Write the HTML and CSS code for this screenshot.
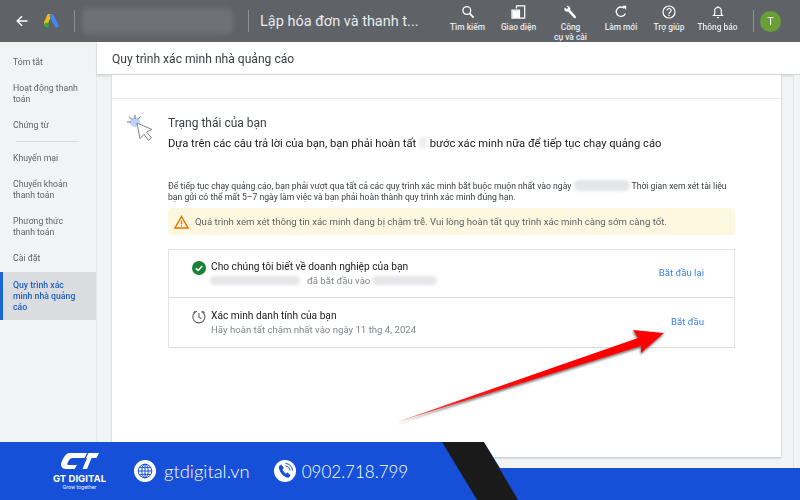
FILE: index.html
```html
<!DOCTYPE html>
<html lang="vi">
<head>
  <meta charset="UTF-8">
  <title>Quy trình xác minh nhà quảng cáo</title>
  <link rel="stylesheet" href="styles.css">
</head>
<body>
<div class="screen">
  <div class="page">

    <header class="topbar">
      <svg class="back-icon" width="12" height="12" viewBox="0 0 12 12"><path d="M11.500 6H1.500M6 1.200L1.200 6 6 10.800" fill="none" stroke="#fff" stroke-width="1.400"/></svg>
      <svg class="ads-logo" width="15" height="14" viewBox="0 0 15 14">
        <path d="M5.200 1.500L1.800 9.500" stroke="#fbbc04" stroke-width="4" stroke-linecap="round"/>
        <path d="M7.600 2l5 9.400" stroke="#4285f4" stroke-width="4.200" stroke-linecap="round"/>
        <circle cx="2.600" cy="11" r="2.400" fill="#34a853"/>
      </svg>
      <span class="top-sep"></span>
      <span class="blur-blob account-blob"></span>
      <span class="top-sep title-sep"></span>
      <span class="top-title">Lập hóa đơn và thanh t...</span>

      <nav class="tools">
        <a class="tool">
          <svg width="14" height="14" viewBox="0 0 14 14"><circle cx="5.800" cy="5.500" r="3.900" fill="none" stroke="#fff" stroke-width="1.300"/><path d="M8.600 8.400l4 4.200" stroke="#fff" stroke-width="1.600"/></svg>
          <span>Tìm kiếm</span>
        </a>
        <a class="tool">
          <svg width="15" height="14" viewBox="0 0 15 14"><path d="M5.500 3.500V.8h8.200v12.400H1V5.200h7.500v8" fill="none" stroke="#fff" stroke-width="1.200"/><rect x="1.500" y="5.800" width="6.500" height="7" fill="#fff"/></svg>
          <span>Giao diện</span>
        </a>
        <a class="tool">
          <svg width="15" height="14" viewBox="0 0 15 14"><path d="M3.400.8L5.200 2.800 4 4.200 2 2.400C1 3.800 1.300 5.500 2.600 6.300c.8.500 1.700.5 2.500.2l5.600 6.300c.6.600 1.400.6 1.900.1.600-.6.600-1.400 0-2L7.200 4.900c.4-1.300 0-2.600-1.100-3.500-.8-.6-1.800-.8-2.700-.6z" fill="#fff"/></svg>
          <span>Công<br>cụ và cài</span>
        </a>
        <a class="tool">
          <svg width="14" height="14" viewBox="0 0 14 14"><path d="M11.300 8.500A4.700 4.700 0 1 1 10.300 3.400" fill="none" stroke="#fff" stroke-width="1.300"/><path d="M8.300.8h3.900v3.900z" fill="#fff"/></svg>
          <span>Làm mới</span>
        </a>
        <a class="tool">
          <svg width="14" height="14" viewBox="0 0 14 14"><circle cx="7" cy="7" r="6" fill="none" stroke="#fff" stroke-width="1.200"/><path d="M5 5.400a2 2 0 1 1 3 1.800c-.7.400-1 .8-1 1.500" fill="none" stroke="#fff" stroke-width="1.200"/><circle cx="7" cy="10.300" r=".8" fill="#fff"/></svg>
          <span>Trợ giúp</span>
        </a>
        <a class="tool">
          <svg width="14" height="14" viewBox="0 0 14 14"><path d="M2.500 10.500h9L10.300 9V5.800A3.300 3.300 0 0 0 3.700 5.800V9z" fill="none" stroke="#fff" stroke-width="1.200"/><path d="M5.800 12h2.400a1.200 1.200 0 0 1-2.400 0zM6.300 1.200h1.400v1.300H6.300z" fill="#fff"/></svg>
          <span>Thông báo</span>
        </a>
      </nav>
      <span class="top-sep avatar-sep"></span>
      <span class="avatar">T</span>
    </header>

    <div class="layout">
      <aside class="sidebar">
        <a class="side-item">Tóm tắt</a>
        <a class="side-item">Hoạt động thanh<br>toán</a>
        <a class="side-item">Chứng từ</a>
        <div class="side-divider"></div>
        <a class="side-item">Khuyến mại</a>
        <a class="side-item">Chuyển khoản<br>thanh toán</a>
        <a class="side-item">Phương thức<br>thanh toán</a>
        <a class="side-item">Cài đặt</a>
        <a class="side-item active">Quy trình xác<br>minh nhà quảng<br>cáo</a>
      </aside>

      <main class="main">
        <div class="title-bar">Quy trình xác minh nhà quảng cáo</div>
        <div class="content">
          <div class="scroll-area">
            <section class="card">
              <div class="card-top"></div>
              <div class="status">
                <svg class="status-icon" width="28" height="29" viewBox="0 0 28 29">
                  <circle cx="8" cy="7" r="5" fill="#bcd3f7"/>
                  <path d="M8 0v4M0 7h4M2 1.500l3 3M13.500 1.500l-2.500 3" stroke="#5f6368" stroke-width=".9" fill="none"/>
                  <path d="M10 8l15 6.500-5.500 2.500 5 6-3 2.500-4.500-6.200-4 4.200z" fill="#fff" stroke="#80868b" stroke-width="1"/>
                </svg>
                <div class="status-body">
                  <h2 class="status-title">Trạng thái của bạn</h2>
                  <p class="status-lead">Dựa trên các câu trả lời của bạn, bạn phải hoàn tất <span class="blur-blob count-blob"></span> bước xác minh nữa để tiếp tục chạy quảng cáo</p>
                  <p class="status-note">Để tiếp tục chạy quảng cáo, bạn phải vượt qua tất cả các quy trình xác minh bắt buộc muộn nhất vào ngày <span class="blur-blob date-blob"></span> Thời gian xem xét tài liệu<br>bạn gửi có thể mất 5–7 ngày làm việc và bạn phải hoàn thành quy trình xác minh đúng hạn.</p>
                  <div class="warning">
                    <svg width="15" height="14" viewBox="0 0 15 14"><path d="M7.500 1.500L1 13h13z" fill="none" stroke="#e37400" stroke-width="1.500"/><path d="M7.500 5.500v4M7.500 10.300v1.300" stroke="#e37400" stroke-width="1.300"/></svg>
                    <span>Quá trình xem xét thông tin xác minh đang bị chậm trễ. Vui lòng hoàn tất quy trình xác minh càng sớm càng tốt.</span>
                  </div>
                  <div class="steps">
                    <div class="step">
                      <svg class="step-icon" width="14" height="14" viewBox="0 0 14 14"><circle cx="7" cy="7" r="7" fill="#188038"/><path d="M3.800 7.200l2.300 2.200 4.200-4.400" fill="none" stroke="#fff" stroke-width="1.500"/></svg>
                      <div class="step-text">
                        <div class="step-name">Cho chúng tôi biết về doanh nghiệp của bạn</div>
                        <div class="step-sub"><span class="blur-blob user-blob"></span>đã bắt đầu vào<span class="blur-blob when-blob"></span></div>
                      </div>
                      <a class="step-link">Bắt đầu lại</a>
                    </div>
                    <div class="step">
                      <svg class="step-icon" width="14" height="14" viewBox="0 0 14 14"><path d="M5 1.200A6 6 0 1 0 9.500 1.500" fill="none" stroke="#5f6368" stroke-width="1.100"/><path d="M7 3v4.200l2.500 1.500M3.500 1l-2 2M10.500 1l2 2" fill="none" stroke="#5f6368" stroke-width="1.100"/></svg>
                      <div class="step-text">
                        <div class="step-name">Xác minh danh tính của bạn</div>
                        <div class="step-sub">Hãy hoàn tất chậm nhất vào ngày 11 thg 4, 2024</div>
                      </div>
                      <a class="step-link">Bắt đầu</a>
                    </div>
                  </div>
                </div>
              </div>
            </section>
          </div>
          <div class="scrollbar"></div>
        </div>
      </main>
    </div>
  </div>

  <svg class="arrow" width="290" height="110" viewBox="390 320 290 110">
    <defs>
      <linearGradient id="arrowFill" gradientUnits="userSpaceOnUse" x1="397" y1="422" x2="540" y2="375">
        <stop offset="0" stop-color="#e88a8a"/>
        <stop offset=".4" stop-color="#f52020"/>
        <stop offset="1" stop-color="#ff0000"/>
      </linearGradient>
      <filter id="arrowShadow" x="-10%" y="-20%" width="120%" height="150%">
        <feDropShadow dx="-0.500" dy="1.800" stdDeviation="1.200" flood-color="#444" flood-opacity=".75"/>
      </filter>
    </defs>
    <path d="M397 422L638 338 633 330 664 333 641 353 641 346z" fill="url(#arrowFill)" filter="url(#arrowShadow)"/>
  </svg>

  <footer class="banner">
    <span class="banner-stripe"></span>
    <div class="brand">
      <svg width="38" height="18" viewBox="0 0 38 18"><path d="M9 1H26L23.500 6H12C9.500 6 8.500 7 7.500 9L6.500 11C6 12.500 6.500 13 8 13H16L13.500 17H5C1 17-1 14 .5 10L2.500 6C4 3 6 1 9 1z" fill="#fff"/><path d="M27.500 1H38L35.500 6H30.500L26 17H21.500L26 6H25z" fill="#fff"/></svg>
      <div class="brand-name">GT DIGITAL</div>
      <div class="brand-tag">Grow together</div>
    </div>
    <div class="contact web">
      <svg width="22" height="22" viewBox="0 0 22 22"><circle cx="11" cy="11" r="11" fill="#fff"/><g fill="none" stroke="#1650d8" stroke-width="1"><circle cx="11" cy="11" r="6.800"/><ellipse cx="11" cy="11" rx="3.200" ry="6.800"/><path d="M11 4.200v13.600M4.200 11h13.600M5.200 7.600h11.600M5.200 14.400h11.600"/></g></svg>
      <span>gtdigital.vn</span>
    </div>
    <div class="contact phone">
      <svg width="22" height="22" viewBox="0 0 22 22"><circle cx="11" cy="11" r="11" fill="#fff"/><path d="M4.800 6.500l2.500-2 2.600 3.600-1.400 1.500c.6 1.700 1.700 3 3.500 4.200l1.600-1.300 3 3-2 2.300C9.800 17.500 4.800 12 4.800 6.500z" fill="#1650d8"/><g fill="none" stroke="#1650d8" stroke-width="1"><path d="M11.500 6a4.500 4.500 0 0 1 4.500 4.500"/><path d="M11.500 3.500a7 7 0 0 1 7 7"/></g></svg>
      <span>0902.718.799</span>
    </div>
  </footer>
</div>
</body>
</html>
```

FILE: styles.css
```css
* {
  box-sizing: border-box;
}

body {
  margin: 0;
  font-family: Roboto, "Liberation Sans", sans-serif;
}

h2, p {
  margin: 0;
}

.screen {
  position: relative;
  width: 800px;
  height: 500px;
  overflow: hidden;
  background: #f1f3f4;
}

.page {
  display: flex;
  flex-direction: column;
  height: 500px;
  filter: blur(0.35px);
}

/* top bar */
.topbar {
  display: flex;
  align-items: center;
  flex: none;
  height: 42px;
  padding-left: 16px;
  background: #5f6368;
  color: #fff;
}

.ads-logo {
  margin-left: 16px;
}

.top-sep {
  flex: none;
  width: 1px;
  height: 22px;
  margin-left: 15px;
  background: #8e9195;
}

.blur-blob {
  display: inline-block;
  border-radius: 6px;
  filter: blur(1.5px);
}

.account-blob {
  width: 151px;
  height: 26px;
  margin-left: 7px;
  background: #6e7175;
  filter: blur(2.5px);
}

.title-sep {
  margin-left: 15px;
}

.top-title {
  margin-left: 11px;
  font-size: 14.500px;
  white-space: nowrap;
  color: #e8eaed;
}

.tools {
  display: grid;
  grid-template-columns: 51px 51px 53px 48px 48px 49px;
  margin-left: auto;
  height: 42px;
  padding-top: 5px;
}

.tool {
  display: flex;
  flex-direction: column;
  align-items: center;
  gap: 3px;
  font-size: 8.400px;
  font-weight: 500;
  line-height: 10px;
  text-align: center;
  white-space: nowrap;
  color: #e8eaed;
}

.avatar-sep {
  margin-left: 11px;
}

.avatar {
  display: flex;
  align-items: center;
  justify-content: center;
  width: 21px;
  height: 21px;
  margin: 0 19px 0 6px;
  border-radius: 50%;
  background: #6a9f35;
  font-size: 11px;
}

/* sidebar */
.layout {
  display: flex;
  flex: 1;
  min-height: 0;
}

.sidebar {
  flex: none;
  width: 97px;
  padding-top: 7px;
  background: #f1f3f4;
  border-right: 1px solid #e6e7e9;
}

.side-item {
  display: block;
  padding: 7.500px 4px 7.500px 13px;
  font-size: 8.700px;
  line-height: 11px;
  color: #5f6368;
}

.side-item.active {
  margin-top: 1px;
  background: #dadce0;
  border-left: 3px solid #1967d2;
  padding-left: 10px;
  font-weight: 500;
  color: #1a5fc4;
}

.side-divider {
  height: 1px;
  margin: 3px 17px 3px 16px;
  background: #dadce0;
}

/* main */
.main {
  display: flex;
  flex-direction: column;
  flex: 1;
  min-width: 0;
}

.title-bar {
  flex: none;
  height: 33px;
  padding: 10px 0 0 15px;
  background: #fff;
  border-bottom: 1px solid #d5d6d8;
  box-shadow: 0 1px 2px rgba(0, 0, 0, 0.12);
  font-size: 12.100px;
  line-height: 15px;
  color: #3c4043;
}

.content {
  display: flex;
  flex: 1;
  min-height: 0;
}

.scroll-area {
  flex: 1;
  display: flex;
  padding: 0 12px 43px 15px;
}

.scrollbar {
  flex: none;
  width: 7px;
  background: #f3f4f6;
  border-left: 1px solid #e3e4e6;
}

.card {
  flex: 1;
  background: #fff;
  box-shadow: 0 1px 2px rgba(60, 64, 67, 0.3);
}

.card-top {
  height: 24px;
  border-bottom: 1px solid #e8eaed;
}

.status {
  display: flex;
  padding: 16px 46px 0 15px;
}

.status-icon {
  flex: none;
  margin-right: 13px;
}

.status-body {
  flex: 1;
  min-width: 0;
}

.status-title {
  font-size: 12px;
  font-weight: 400;
  line-height: 16px;
  color: #3c4043;
}

.status-lead {
  margin-top: 5px;
  font-size: 11.200px;
  line-height: 16px;
  white-space: nowrap;
  color: #202124;
}

.count-blob {
  width: 8px;
  height: 11px;
  vertical-align: -1px;
  background: #eeeeee;
}

.status-note {
  margin-top: 28px;
  font-size: 8.650px;
  line-height: 11px;
  white-space: nowrap;
  color: #3c4043;
}

.date-blob {
  width: 56px;
  height: 11px;
  vertical-align: -2px;
  background: #e4e5e7;
}

.warning {
  display: flex;
  align-items: center;
  gap: 6px;
  height: 27px;
  margin-top: 5px;
  padding-left: 6px;
  border-radius: 4px;
  background: #fef7e0;
  font-size: 9.600px;
  white-space: nowrap;
  color: #5f6368;
}

.steps {
  margin-top: 14px;
  border: 1px solid #e3e4e6;
  border-bottom-color: #d9dadc;
}

.step {
  display: flex;
  align-items: flex-start;
  height: 47px;
  padding: 10px 30px 0 23px;
}

.step + .step {
  height: 50px;
  padding-top: 11px;
  border-top: 1px solid #dadce0;
}

.step-icon {
  flex: none;
  margin: 1px 5px 0 0;
}

.step-text {
  flex: 1;
}

.step-name {
  font-size: 10.200px;
  line-height: 14px;
  color: #202124;
}

.step-sub {
  display: flex;
  align-items: center;
  font-size: 9.600px;
  line-height: 13px;
  color: #80868b;
}

.user-blob {
  width: 90px;
  height: 9px;
  margin: 0 7px 0 -1px;
  background: #e6e7e9;
}

.when-blob {
  width: 65px;
  height: 9px;
  margin-left: 2px;
  background: #e6e7e9;
}

.step-link {
  margin-top: 7px;
  font-size: 9.600px;
  line-height: 12px;
  color: #3b82e8;
}

/* red annotation arrow drawn over the screenshot */
.arrow {
  position: absolute;
  left: 390px;
  top: 320px;
}

/* promo banner over the bottom of the page */
.banner {
  position: absolute;
  left: 0;
  bottom: 0;
  display: flex;
  align-items: center;
  width: 800px;
  height: 58px;
  padding-left: 52px;
  color: #fff;
  background: #1650d8;
  clip-path: polygon(0 0, 484px 0, 500px 26px, 800px 26px, 800px 58px, 0 58px);
}

.banner-stripe {
  position: absolute;
  inset: 0;
  background: #1a1a1a;
  clip-path: polygon(442px 0, 484px 0, 518px 58px, 477px 58px);
}

.brand {
  display: flex;
  flex-direction: column;
  align-items: center;
  width: 55px;
}

.brand-name {
  margin-top: 3px;
  font-family: Inter, sans-serif;
  font-size: 9.600px;
  font-weight: 700;
  line-height: 11px;
  white-space: nowrap;
}

.brand-tag {
  font-family: Inter, sans-serif;
  font-size: 5px;
  line-height: 7px;
  white-space: nowrap;
}

.contact {
  display: flex;
  align-items: center;
  font-family: Lato, sans-serif;
  font-weight: 300;
}

.web {
  gap: 8px;
  margin-left: 27px;
  font-size: 18.400px;
}

.phone {
  gap: 6px;
  margin-left: 24px;
  font-size: 17px;
}
```
